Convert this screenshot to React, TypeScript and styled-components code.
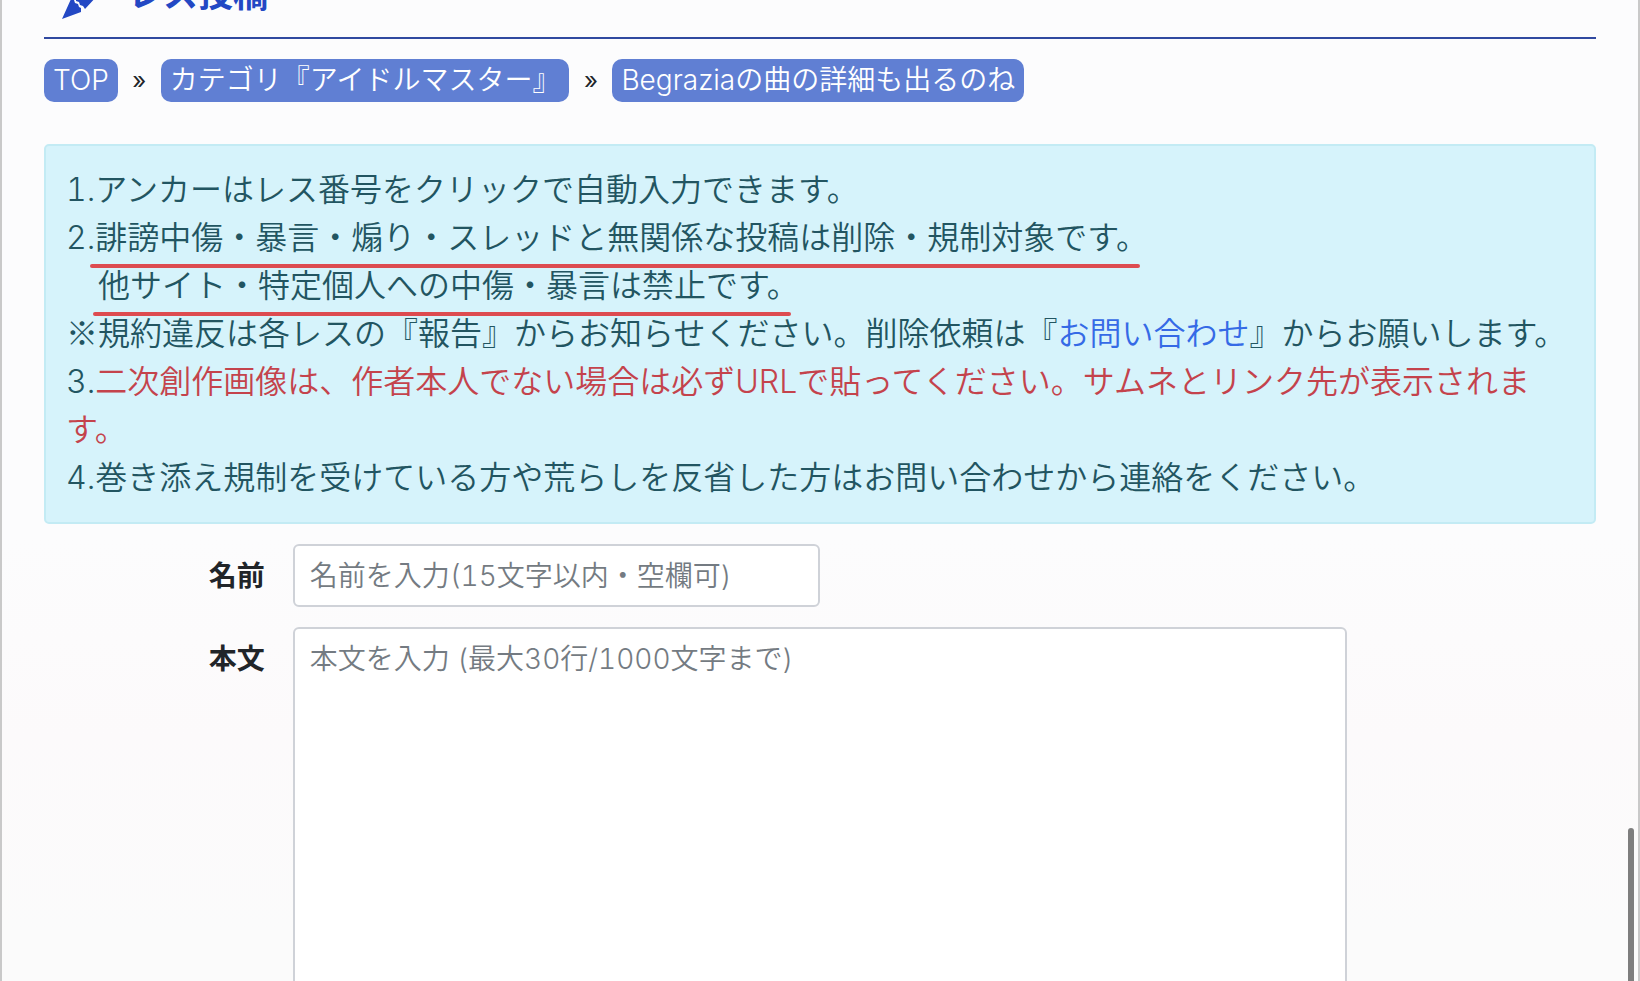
import React from 'react';
import styled, { createGlobalStyle } from 'styled-components';

const GlobalStyle = createGlobalStyle`
  *, *::before, *::after { box-sizing: border-box; }
  body {
    margin: 0;
    color: #212529;
    font-family: Inter, "Noto Sans CJK JP", sans-serif;
    font-size: 28px;
    font-weight: 350;
    font-variant-numeric: tabular-nums;
    line-height: 42px;
  }
`;

const Page = styled.main`
  position: relative;
  height: 100vh;
  overflow: hidden;
  padding: 0 42px;
  border: solid #c9c9c9;
  border-width: 0 2px;
  background: linear-gradient(#fcfcfd 55%, #fcfafb 75%, #fbfbfb 95%);
`;

const Header = styled.header`
  display: flex;
  align-items: flex-end;
  height: 39px;
  padding: 0 18px;
  overflow: hidden;
  border-bottom: 2px solid #3049a0;
  color: #2348c4;
`;

const PencilIcon = styled.svg`
  flex: none;
  width: 36px;
  height: 36px;
  margin-bottom: 18px;
`;

const Title = styled.h1`
  margin: 0 0 22px 30px;
  font-size: 35px;
  line-height: 42px;
  font-weight: 700;
`;

const Breadcrumb = styled.nav`
  display: flex;
  align-items: center;
  gap: 14px;
  margin: 20px 0 42px;
  color: #212529;
`;

const Crumb = styled.a`
  height: 43px;
  padding: 0 9px;
  border-radius: 10px;
  background: #607fd3;
  color: #fff;
  text-decoration: none;
  white-space: nowrap;
`;

const Separator = styled.span`
  width: 15px;
  text-align: center;
  font-size: 24px;
  font-weight: 400;
`;

const Notice = styled.section`
  padding: 20px;
  border: 2px solid #c3ebf4;
  border-radius: 5px;
  background: #d6f3fb;
  color: #225561;
  font-size: 32px;
  line-height: 48px;
  p { margin: 0; }
`;

const ReferenceMark = styled.span`
  font-family: "Noto Sans CJK JP", sans-serif;
  line-height: 1;
`;

const Marked = styled.span`
  position: relative;
  display: inline-block;
  &::after {
    content: '';
    position: absolute;
    right: 8px;
    bottom: -6px;
    left: -5px;
    height: 4px;
    border-radius: 2px;
    background: #dd4b50;
  }
`;

const Warning = styled.span`
  color: #c4434c;
`;

const ContactLink = styled.a`
  color: #356ae6;
  text-decoration: none;
`;

const Form = styled.form`
  display: grid;
  gap: 20px;
  margin: 20px -15px 0;
`;

const Field = styled.div`
  display: grid;
  grid-template-columns: 2fr 8fr 2fr;
  align-items: start;
`;

const Label = styled.label`
  padding: 11px 28px 10px 0;
  text-align: right;
  font-weight: 700;
`;

const TextInput = styled.input<{ $share: string }>`
  width: ${({ $share }) => $share};
  height: 63px;
  padding: 9px 15px;
  border: 2px solid #cfd2d8;
  border-radius: 6px;
  background: #fff;
  font: inherit;
  font-variant-numeric: tabular-nums;
  &::placeholder { color: #747b82; opacity: 1; }
`;

const TextArea = styled(TextInput).attrs({ as: 'textarea' })`
  display: block;
  height: 480px;
  resize: none;
`;

const ScrollThumb = styled.div`
  position: absolute;
  right: 4px;
  bottom: -6px;
  width: 6px;
  height: 159px;
  border-radius: 3px;
  background: #7e7e7e;
`;

export default function App() {
  return (
    <>
      <GlobalStyle />
      <Page>
        <Header>
          <PencilIcon viewBox="0 0 36 36" fill="currentColor" aria-hidden="true">
            <path d="M0 36 9 16l3 1 1 3 3 1 1 3 2 1v4z" />
            <path d="M14 16 27 3l9 9-13 14-2-3-3-1-1-3-3-1z" />
          </PencilIcon>
          <Title>レス投稿</Title>
        </Header>
        <Breadcrumb>
          <Crumb href="#top">TOP</Crumb>
          <Separator>»</Separator>
          <Crumb href="#category">カテゴリ『アイドルマスター』</Crumb>
          <Separator>»</Separator>
          <Crumb href="#thread">Begraziaの曲の詳細も出るのね</Crumb>
        </Breadcrumb>
        <Notice>
          <p>1.アンカーはレス番号をクリックで自動入力できます。</p>
          <p>2.<Marked>誹謗中傷・暴言・煽り・スレッドと無関係な投稿は削除・規制対象です。</Marked></p>
          <p>　<Marked>他サイト・特定個人への中傷・暴言は禁止です。</Marked></p>
          <p><ReferenceMark>※</ReferenceMark>規約違反は各レスの『報告』からお知らせください。削除依頼は『<ContactLink href="#contact">お問い合わせ</ContactLink>』からお願いします。</p>
          <p>3.<Warning>二次創作画像は、作者本人でない場合は必ずURLで貼ってください。サムネとリンク先が表示されます。</Warning></p>
          <p>4.巻き添え規制を受けている方や荒らしを反省した方はお問い合わせから連絡をください。</p>
        </Notice>
        <Form>
          <Field>
            <Label htmlFor="name">名前</Label>
            <TextInput id="name" $share="50%" placeholder="名前を入力(15文字以内・空欄可)" />
          </Field>
          <Field>
            <Label htmlFor="body">本文</Label>
            <TextArea id="body" $share="100%" placeholder="本文を入力 (最大30行/1000文字まで)" />
          </Field>
        </Form>
        <ScrollThumb />
      </Page>
    </>
  );
}
